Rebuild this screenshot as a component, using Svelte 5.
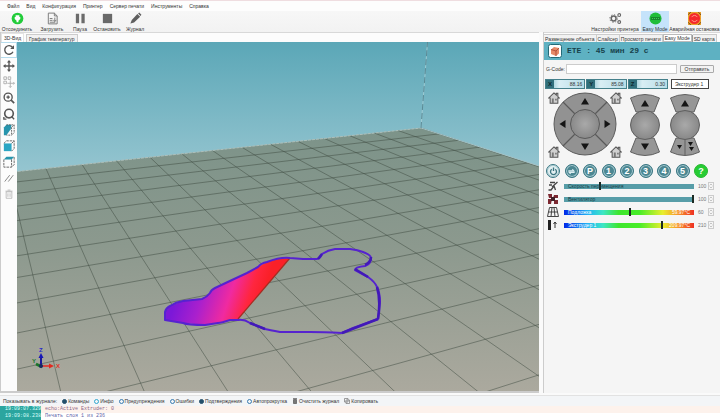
<script>
  const menu = ['Файл', 'Вид', 'Конфигурация', 'Принтер', 'Сервер печати', 'Инструменты', 'Справка'];
  const round = ['power', 'sd', 'P', '1', '2', '3', '4', '5', '?'];
  const homes = ['X', 'Y', 'Z', 'all'];
  const tools = ['rotate', 'move', 'moveobj', 'zoom', 'fit', 'iso', 'front', 'top', 'parallel', 'trash'];
  const axes = [
    { name: 'X', value: '88.16' },
    { name: 'Y', value: '85.08' },
    { name: 'Z', value: '0.30' }
  ];
  const filters = [
    { name: 'Команды', on: true },
    { name: 'Инфо', on: false, light: true },
    { name: 'Предупреждения', on: false },
    { name: 'Ошибки', on: false },
    { name: 'Подтверждения', on: true },
    { name: 'Автопрокрутка', on: false }
  ];
  let sliders = $state([
    { id: 'speed', label: 'Скорость перемещения', right: '', pos: 27, value: '100', heat: false },
    { id: 'fan', label: 'Вентилятор', right: '', pos: 100, value: '100', heat: false },
    { id: 'bed', label: 'Подложка', right: '59.97°C', pos: 51, value: '60', heat: true },
    { id: 'hotend', label: 'Экструдер 1', right: '209.97°C', pos: 76, value: '210', heat: true }
  ]);

  // Perspective projection of the print bed: u runs along the left rear edge, v along the right one.
  function project(u, v) {
    const w = 1 - 0.01673 * u - 0.0376 * v;
    return [(421 - 29.62 * u + 1.45 * v) / w, (128 + 0.29 * u + 0.87 * v) / w];
  }
  function segment(a, b) {
    return `M${a[0].toFixed(1)} ${a[1].toFixed(1)}L${b[0].toFixed(1)} ${b[1].toFixed(1)}`;
  }
  let grid = '';
  for (let u = 0; u <= 15; u++) grid += segment(project(u, 0), project(u, 18));
  for (let v = 1; v <= 17; v++) grid += segment(project(0, v), project(15, v));
</script>

<div class="app">
  <nav class="menu">
    {#each menu as item}<button>{item}</button>{/each}
  </nav>

  <header class="toolbar">
    <button class="tool wide">
      <svg viewBox="0 0 14 14"><circle cx="7" cy="7" r="6.3" fill="#22cc3a" /><path d="M5 3.5h4v2h1v2L8 9.5V11H6V9.5L4 7.5v-2h1z" fill="#fff" /></svg>
      <span>Отсоединить</span>
    </button>
    <button class="tool load">
      <svg viewBox="0 0 14 14"><path d="M2.5 1.2h6.5l3 3v8.6h-9.5zM9 1.2v3h3M4 7h3M4 9h3M4 11h6M9.5 6v4M8 8.5l1.5 1.8L11 8.5" fill="none" stroke="#777" /></svg>
      <span>Загрузить</span>
    </button>
    <button class="tool pause">
      <svg viewBox="0 0 14 14"><path d="M2 2h3.5v10H2zM8 2h3.5v10H8z" fill="#6b6b6b" /></svg>
      <span>Пауза</span>
    </button>
    <button class="tool wide">
      <svg viewBox="0 0 14 14"><path d="M2 2h10v10H2z" fill="#696969" /></svg>
      <span>Остановить</span>
    </button>
    <button class="tool">
      <svg viewBox="0 0 14 14"><path d="M1.5 12.5 3 8.5 9 2.2 12 5.2 5.5 11.2zM9.8 1.6l1.2-1 2.4 2.4-1 1.4z" fill="#5f5f5f" /></svg>
      <span>Журнал</span>
    </button>
    <div class="grow"></div>
    <button class="tool settings">
      <svg viewBox="0 0 14 14" fill="none" stroke="#666"><circle cx="5" cy="7" r="2.6" stroke-width="1.6" /><circle cx="5" cy="7" r="4.1" stroke-dasharray="1.4 1.8" /><circle cx="11" cy="3.3" r="1.5" stroke-width="1.2" /><circle cx="11" cy="10.8" r="1.5" stroke-width="1.2" /></svg>
      <span>Настройки принтера</span>
    </button>
    <button class="tool easy">
      <svg viewBox="0 0 14 14"><circle cx="7" cy="7" r="6.5" fill="#1fbd3b" /><path d="M2 5.6h10v2.8H2z" fill="#16792c" /><path d="M3 7h1.3M5.2 7h1.3M7.4 7h1.3M9.6 7h1.3" stroke="#43d65a" /></svg>
      <span>Easy Mode</span>
    </button>
    <button class="tool stop">
      <svg viewBox="0 0 14 14"><path d="M0 0h14v14H0z" fill="#e9a12c" /><path d="M0 3 3 0M11 0l3 3M0 11l3 3M14 11l-3 3" stroke="#693a16" /><circle cx="7" cy="7" r="6" fill="#f5282b" /><path d="M4 5.5a3.4 3.4 0 0 1 6 0M10 8.5a3.4 3.4 0 0 1-6 0" stroke="#ff9b8c" fill="none" /></svg>
      <span>Аварийная остановка</span>
    </button>
  </header>

  <main>
    <section class="left">
      <div class="tabs">
        <button class="tab on">3D-Вид</button>
        <button class="tab">График температур</button>
      </div>
      <div class="view">
        <aside>
          {#each tools as t}
            <button class="side {t}" aria-label={t}>
              <svg viewBox="0 0 14 14" fill="none" stroke="#555" stroke-width="1.6">
                {#if t === 'rotate'}
                  <path d="M11 3.8A5 5 0 1 0 11.6 9" /><path d="M12.8 1.5v4.4H8.4z" fill="#555" stroke="none" />
                {:else if t === 'move'}
                  <path d="M7 2v10M2 7h10" /><path d="M7 0l2.4 3H4.600zM7 14l2.4-3H4.600zM0 7l3-2.400v4.800zM14 7l-3-2.400v4.800z" fill="#555" stroke="none" />
                {:else if t === 'moveobj'}
                  <g stroke="#aaa" stroke-width="1"><path d="M1 1h3v3H1zM6 1h3v3H6zM1 6h3v3H1z" /><path d="M8.500 5v8M5 8.500h8M7 12l1.500 1.500L10 12M12 7l1.500 1.500L12 10" /></g>
                {:else if t === 'zoom'}
                  <circle cx="6" cy="6" r="4.700" /><path d="M9.500 9.500 13 13" stroke-width="2" /><path d="M6 4v4M4 6h4" />
                {:else if t === 'fit'}
                  <circle cx="7" cy="6.500" r="5" stroke-width="1.900" /><path d="M10 10l3 3M1 10.500v2.500h3" stroke-width="1.600" />
                {:else if t === 'iso'}
                  <path d="M1 4 4 1h6L9 6 4 13H1z" fill="#2795ad" stroke="none" /><path d="M4 1h9v9l-3 3H4M10 4l3-3M10 4v9" stroke-width="1" stroke-dasharray="2 1" />
                {:else if t === 'front'}
                  <path d="M1 4h9v9H1z" fill="#2ba5c3" stroke="none" /><path d="M1 4 4 1h9v9l-3 3M10 4l3-3" stroke-width="1" stroke-dasharray="3 1" />
                {:else if t === 'top'}
                  <path d="M1 4 4 1h9l-3 3z" fill="#2795ad" stroke="none" /><path d="M1 4v9h9l3-3V1M10 4v9" stroke-width="1" stroke-dasharray="3 1" />
                {:else if t === 'parallel'}
                  <path d="M1 12 8 3M6 12l7-9" stroke="#777" stroke-width="1.200" />
                {:else}
                  <path d="M3 4h8v9H3zM2 3h10M5 1.500h4M5.500 6v5M8.500 6v5" stroke="#aaa" stroke-width="1" />
                {/if}
              </svg>
            </button>
          {/each}
        </aside>
        <svg class="scene" viewBox="17 42 522 349" preserveAspectRatio="xMidYMid slice" role="img" aria-label="3D">
          <defs>
            <linearGradient id="sky" x1="0" y1="42" x2="0" y2="171" gradientUnits="userSpaceOnUse"><stop offset="0" stop-color="#5ba7b7" /><stop offset="1" stop-color="#95c5d0" /></linearGradient>
            <linearGradient id="floor" x1="0" y1="128" x2="0" y2="391" gradientUnits="userSpaceOnUse"><stop offset="0" stop-color="#7c9389" /><stop offset=".45" stop-color="#8c998e" /><stop offset="1" stop-color="#aba99e" /></linearGradient>
            <linearGradient id="skin" x1="180" y1="288" x2="256" y2="314" gradientUnits="userSpaceOnUse"><stop offset="0" stop-color="#7c18d8" /><stop offset=".3" stop-color="#aa20cd" /><stop offset=".62" stop-color="#f02aa0" /><stop offset=".85" stop-color="#ff263f" /><stop offset="1" stop-color="#fa2028" /></linearGradient>
          </defs>
          <path d="M17 42h522v349H17z" fill="url(#sky)" />
          <path d="M-30 176.600 421 128 595 184V391H-30z" fill="url(#floor)" />
          <path d={grid} stroke="#3e4a40" stroke-opacity=".7" stroke-width=".7" fill="none" />
          <path d="M-30 176.600 421 128" stroke="#aebfba" stroke-width="1" stroke-dasharray="3 1" />
          <path d="M421 128 595 184" stroke="#a5c2c5" stroke-width="1" />
          <path d="M421 128 427.500 42" stroke="#a3cdd5" stroke-width=".9" />
          <path d="M421 128 427.500 42" stroke="#477985" stroke-width=".8" stroke-dasharray="6 3" />
          <path d="M290 258 278 259 267 262 258 267 247 273 232 280 215 288 210 293 202 299 183 301 170 306 165 312 165 320 183 323 205 325 218 323 230 320 238 319z" fill="url(#skin)" />
          <path d="M290 258 238 319" stroke="#a52d21" stroke-width="1.200" />
          <path d="M165 312 Q166 308 170 306 Q176 302 183 301 L202 299 Q207 297 210 293 Q211 290 215 288 L232 280 247 273 258 267 Q261 263 267 262 Q280 257 290 258 L303 259 H317 Q320 259 322 254 Q328 250 335 249 H350 Q358 250 363 252 Q371 255 371 258 Q371 264 365 266 Q355 267 355 270 L368 277 Q375 282 377 287 Q380 293 380 302 L378 319 353 328 342 333 Q323 332 310 332 H280 Q269 330 265 329 L250 323 Q244 319 238 320 L230 320 Q221 323 218 323 L205 325 Q188 325 183 323 L165 320z" fill="none" stroke="#5623cf" stroke-width="2" stroke-linejoin="round" />
          <path d="M378 319Q381 300 377 287M355 269 368 277M378 319 342 333M250 323 265 329M322 254l-4 5M371 257q0 5-6 8" fill="none" stroke="#4219b8" stroke-width="2.600" stroke-linejoin="round" />
          <g stroke-width="1.600" fill="none"><path d="M41 366V356" stroke="#1a1a9a" stroke-width="2" /><path d="M41 366h11" stroke="#e03028" /><path d="M42 367l-6-3" stroke="#197529" stroke-width="2.600" /></g>
          <path d="m41 353 2.500 5h-5z" fill="#1717b8" /><path d="m54 366-5-2.400v4.800z" fill="#e2281f" /><circle cx="41" cy="366" r="2" fill="#182863" />
          <g font-family="Liberation Sans, sans-serif" font-weight="bold" font-size="6"><text x="39" y="352" fill="#2525cc">Z</text><text x="56" y="368" fill="#e03028">X</text><text x="32" y="363" fill="#197529">Y</text></g>
        </svg>
      </div>
    </section>

    <section class="right">
      <div class="tabs">
        <button class="tab">Размещение объекта</button>
        <button class="tab">Слайсер</button>
        <button class="tab">Просмотр печати</button>
        <div class="tip" role="tooltip">Easy Mode</div>
        <button class="tab">SD карта</button>
      </div>
      <div class="panel">
        <div class="banner">
          <svg viewBox="0 0 14 14"><rect x=".5" y=".5" width="13" height="13" rx="2" fill="#fff" stroke="#246b78" /><path d="M3 5.500 6 3l5 1v5.500L8 12 3 10z" fill="#e78a68" /><path d="M3 5.500 8 7v5M8 7l3-3" stroke="#a84331" stroke-width=".8" fill="none" /></svg>
          <span>ETE : 45 мин 29 с</span>
        </div>
        <div class="gcode">
          <label for="gcode">G-Code:</label>
          <input id="gcode" type="text" />
          <button>Отправить</button>
        </div>
        <div class="coords">
          {#each axes as a}
            <div class="axis"><b>{a.name}</b><span>{a.value}</span></div>
          {/each}
          <select aria-label="Экструдер"><option>Экструдер 1</option></select>
        </div>
        <div class="jog">
          <div class="xy">
            <svg viewBox="0 0 76 68">
              <defs><radialGradient id="ball"><stop offset="0" stop-color="#a9a9a9" /><stop offset="1" stop-color="#888" /></radialGradient></defs>
              <circle cx="38" cy="34" r="31" fill="#929292" stroke="#5c5c5c" />
              <path d="M16 12l44 44M60 12 16 56" stroke="#5a5a5a" stroke-width="1.200" />
              <circle cx="38" cy="34" r="14.500" fill="url(#ball)" stroke="#5a5a5a" />
              <path d="M38 8l4 6.500h-8zM38 60l4-6.500h-8zM12.500 34l6-4v8zM63.500 34l-6-4v8z" fill="#151515" />
            </svg>
            {#each homes as h}
              <button class="home h{h}" aria-label="Home {h}">
                <svg viewBox="0 0 14 14"><path d="M7 1 .8 7h1.700v6h9V7h1.700L11.500 5.300V1.500H9.700v2z" fill="#d0d0d0" stroke="#555" stroke-width="1.200" /><path d="M4.500 7.500h2.200V13H4.500zM8.300 8h1.900v2H8.300z" fill="#777" /></svg>
              </button>
            {/each}
          </div>
          <svg class="pad" viewBox="0 0 32 68">
            <path d="M1.500 7Q16 0 30.500 7L25 21H7zM1.500 61Q16 68 30.500 61L25 47H7z" fill="#969696" stroke="#606060" />
            <circle cx="16" cy="34" r="14.500" fill="url(#ball)" stroke="#5f5f5f" />
            <path d="M16 9l4 6.500h-8zM16 59l4-6.500h-8z" fill="#151515" />
          </svg>
          <svg class="pad" viewBox="0 0 32 68">
            <path d="M1.500 7Q16 0 30.500 7L25 21H7zM1.500 61Q16 68 30.500 61L25 47H7zM16 47v17" fill="#969696" stroke="#606060" />
            <circle cx="16" cy="34" r="14.500" fill="url(#ball)" stroke="#5f5f5f" />
            <path d="M16 9l4 6.500h-8zM10.500 58l2.500-4H8zM21.500 55l2.500-4h-5zM22.500 60l2.500-4h-5z" fill="#151515" />
          </svg>
        </div>
        <div class="rounds">
          {#each round as r}
            <button class:green={r === '?'} aria-label={r}>
              {#if r === 'power'}
                <svg viewBox="0 0 10 10" fill="none" stroke="#3b7580" stroke-width="1.500"><path d="M3 2.500a3.300 3.300 0 1 0 4 0M5 .5v4" /></svg>
              {:else if r === 'sd'}
                <svg viewBox="0 0 10 10" fill="none" stroke="#dfeff2" stroke-width="1.300"><path d="M1.500 4.300h6L6 2.500M8.500 6h-6L4 7.700" /></svg>
              {:else}{r}{/if}
            </button>
          {/each}
        </div>
        <div class="sliders">
          {#each sliders as s}
            <div class="row">
              <svg class="ico" viewBox="0 0 12 10">
                {#if s.id === 'speed'}
                  <path d="M3 1.500h5M2 4h3M10.500 1 5 6M7 5 4 9H1.500M7 5l1.500 4" stroke="#444" stroke-width="1.300" fill="none" />
                {:else if s.id === 'fan'}
                  <path d="M1 0h4v4H2zM7 1h4v3H6zM1 5h4l-1 5H1zM7 6h4v4H7z" fill="#7c2831" /><path d="M4 3h4v4H4z" fill="#402027" />
                {:else if s.id === 'bed'}
                  <path d="M2.500.5h7l2 9H.500zM1.500 5h9M5 .5l-1 9M7 .5l1 9" stroke="#444" fill="none" />
                {:else}
                  <path d="M1 0h3v10H1z" fill="#222" /><path d="M8 2v6M6.500 4 8 2l1.500 2" stroke="#333" fill="none" />
                {/if}
              </svg>
              <div class="bar">
                <input type="range" class:heat={s.heat} id={s.id} min="0" max="100" bind:value={s.pos} />
                <label for={s.id} class:white={s.heat}><span>{s.label}</span><span>{s.right}</span></label>
              </div>
              <output for={s.id}>{s.value}</output>
              <button class="spin" aria-label="Изменить"><svg viewBox="0 0 6 8"><path d="M1 3l2-2 2 2M1 5l2 2 2-2" fill="none" stroke="#aaa" /></svg></button>
            </div>
          {/each}
        </div>
      </div>
    </section>
  </main>

  <footer>
    <div class="logbar">
      <span class="show">Показывать в журнале:</span>
      {#each filters as f}
        <button aria-pressed={f.on}><i class:on={f.on} class:light={f.light}></i>{f.name}</button>
      {/each}
      <button><svg viewBox="0 0 6 6"><path d="M1.500 1.500h3v4h-3zM1 .5h4" fill="#777" stroke="#555" stroke-width=".7" /></svg>Очистить журнал</button>
      <button><svg viewBox="0 0 6 6"><path d="M.5.500h3.500v3.500H.500zM2 2h3.500v3.500H2z" fill="none" stroke="#777" stroke-width=".7" /></svg>Копировать</button>
    </div>
    <div class="log">
      <div class="line tint"><time>19:09:07.329</time><span>echo:Active Extruder: 0</span></div>
      <div class="line"><time>19:09:08.238</time><span>Печать слоя 1 из 236</span></div>
    </div>
  </footer>
</div>

<style>
  :global(body) { background: #fff; }
  .app { display: flex; flex-direction: column; height: 100vh; min-height: 400px; overflow: hidden; background: #fafafa; color: #333; font: 5px/6px "Liberation Sans", Arial, sans-serif; box-sizing: border-box; border-top: 1px solid #efdde0; }
  button, input, select { font: inherit; color: inherit; margin: 0; padding: 0; border: 0; background: none; box-sizing: border-box; white-space: nowrap; }
  svg { display: block; }
  .menu { display: flex; gap: 7px; padding: 1px 7px 2px; height: 10px; box-sizing: border-box; background: #fdfdfd; }
  .toolbar { display: flex; height: 21px; background: linear-gradient(#f7f7f7, #f2f2f2); }
  .tool { display: flex; flex-direction: column; align-items: center; gap: 1px; width: 22px; padding-top: 1px; }
  .tool svg { width: 13px; height: 13px; }
  .wide { width: 34px; }
  .load { width: 36px; }
  .pause { width: 20px; }
  .grow { flex: 1; }
  .settings { width: 52px; }
  .easy { width: 28px; background: #c5e3fb; }
  .stop { width: 51px; }
  main { display: flex; flex: 1; min-height: 0; gap: 4px; background: #fafafa; }
  .left { display: flex; flex-direction: column; flex: 1; min-width: 0; border-left: 1px solid #ccc; border-bottom: 2px solid #ccc; }
  .right { display: flex; flex-direction: column; width: 177px; border-left: 1px solid #ccc; box-sizing: border-box; }
  .tabs { display: flex; align-items: flex-end; height: 10px; border-top: 1px solid #d8d8d8; box-sizing: border-box; background: #fcfcfc; }
  .tab { height: 8px; padding: 0 2px; border: 1px solid #ccc; border-bottom: 0; background: #f2f2f2; }
  .tab.on { background: #fff; border-color: #e4e4e4; height: 9px; }
  .left .tab.on { margin-right: 2px; }
  .right .tab { padding: 0 1px; border-left: 0; }
  .tip { height: 8px; margin-right: 1px; padding: 0 1px; box-sizing: border-box; white-space: nowrap; background: #fff; border: 1px solid #bbb; box-shadow: 1px 1px 1px #999; }
  .view { display: flex; flex: 1; min-height: 0; }
  aside { display: flex; flex-direction: column; width: 16px; background: #fcfcfc; }
  .side { display: flex; align-items: center; justify-content: center; height: 16px; width: 16px; }
  .side svg { width: 12px; height: 12px; }
  .rotate { border: 1px solid #b6dced; border-left: 0; background: #fff; }
  .trash svg, .parallel svg { width: 10px; height: 10px; }
  .scene { flex: 1; min-width: 0; width: 100%; height: 100%; }
  .panel { flex: 1; background: #f5f5f5; }
  .banner { display: flex; align-items: center; gap: 5px; height: 18px; padding-left: 4px; background: #5eb1c2; color: #17414b; font: bold 8px/10px "Liberation Mono", "Courier New", monospace; white-space: pre; }
  .banner svg { width: 14px; height: 14px; }
  .gcode { display: flex; align-items: center; gap: 3px; padding: 4px 6px 4px 2px; }
  .gcode label { width: 17px; white-space: nowrap; }
  .gcode input { flex: 1; min-width: 0; height: 10px; border: 1px solid #ccc; background: #fff; }
  .gcode button { width: 34px; height: 8px; line-height: 6px; border: 1px solid #aaa; border-radius: 1px; background: #f3f3f3; }
  .coords { display: flex; gap: 1px; margin: 1px 11px 0 1px; height: 10px; }
  .axis { display: flex; flex: 1; align-items: center; border: 1px solid #45808b; background: linear-gradient(90deg, #70b5c4, #d9eef4 35%, #b6dde8); box-sizing: border-box; }
  .axis b { width: 8px; height: 8px; line-height: 8px; font-size: 6px; text-align: center; background: #316f7b; color: #0d262c; }
  .axis span { flex: 1; text-align: right; padding-right: 2px; }
  .coords select { width: 38px; margin-left: 2px; border: 1px solid #444; background: #fff; appearance: none; padding: 0 3px; }
  .jog { display: flex; gap: 8px; height: 72px; padding: 1px 0 0 3px; box-sizing: border-box; }
  .xy { position: relative; width: 76px; height: 68px; }
  .pad { width: 32px; height: 68px; margin-top: 1px; }
  .xy + .pad { margin-left: -2px; }
  .home { position: absolute; width: 12px; height: 12px; }
  .hX { left: 1px; top: 2px; }
  .hY { right: 1px; top: 2px; }
  .hZ { left: 1px; bottom: 0; }
  .hall { right: 1px; bottom: 0; }
  .rounds { display: flex; justify-content: space-between; padding: 3px 12px 0 2px; }
  .rounds button { display: flex; align-items: center; justify-content: center; width: 14px; height: 14px; border-radius: 50%; background: #4c8792; color: #fff; border: 1px solid #397682; box-shadow: inset 0 0 0 1px #a9cbd2; font: bold 9px/10px "Liberation Sans", Arial, sans-serif; }
  .rounds button:first-child { background: #e3f0f2; }
  .rounds svg { width: 9px; height: 9px; }
  .rounds .green { background: #27cc34; border-color: #27b830; box-shadow: none; }
  .sliders { display: flex; flex-direction: column; gap: 3px; padding: 3px 6px 0 3px; }
  .row { display: flex; align-items: center; height: 10px; }
  .ico { width: 12px; height: 10px; margin-right: 5px; }
  .bar { position: relative; display: flex; flex: 1; }
  .bar input { width: 100%; height: 9px; appearance: none; background: linear-gradient(#579da8, #579da8) center / 100% 5px no-repeat; }
  .bar input.heat { background: linear-gradient(90deg, #0028e8, #21b2f6 18%, #3ee6c5 30%, #3ee62e 42%, #48ed28 58%, #e9ee2e 76%, #f79b2b 87%, #ee3022) center / 100% 5px no-repeat; }
  .bar input::-webkit-slider-thumb { appearance: none; width: 2px; height: 8px; background: #1c2a22; }
  .bar label { position: absolute; inset: 0 4px; display: flex; justify-content: space-between; align-items: center; pointer-events: none; color: #163d46; white-space: nowrap; }
  .bar label.white { color: #fff; }
  output { width: 10px; padding-left: 4px; color: #777; }
  .spin { width: 6px; height: 8px; border: 1px solid #ccc; }
  .spin svg { width: 4px; height: 6px; }
  footer { background: #fff; border-top: 2px solid #fafafa; }
  .logbar { display: flex; align-items: center; gap: 5px; height: 11px; padding: 0 3px; background: #f3f5f7; border-top: 1px solid #e2e2e2; box-sizing: border-box; white-space: nowrap; }
  .logbar button { display: flex; align-items: center; gap: 1px; }
  .logbar svg { width: 6px; height: 6px; }
  .logbar i { width: 5px; height: 5px; border: 1px solid #397bb0; border-radius: 50%; box-sizing: border-box; }
  .logbar i.on { background: #24506c; border-color: #24506c; }
  .logbar i.light { border-color: #30a7cf; }
  .log { font: 5px/7px "Liberation Mono", "Courier New", monospace; color: #6263a8; }
  .line { display: flex; gap: 4px; height: 7px; }
  .line time { width: 36px; padding-left: 5px; background: #2ba59f; color: #d9fffa; }
  .tint { background: #fdf2ec; color: #8a6789; }
</style>
